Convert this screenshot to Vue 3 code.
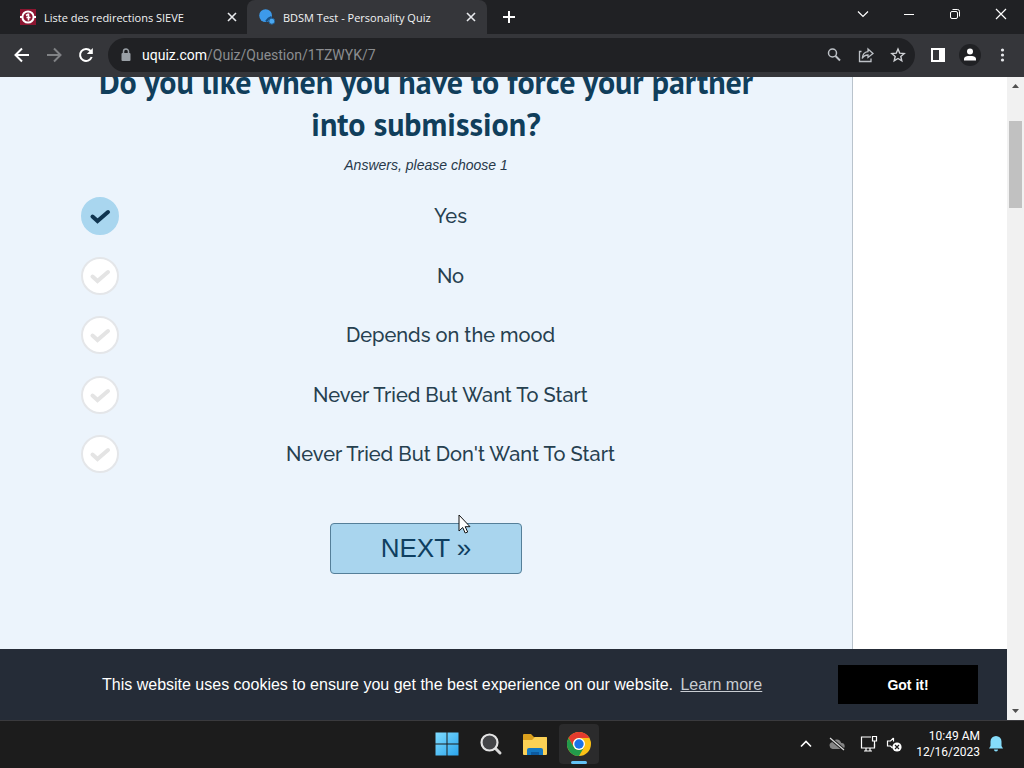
<script setup>
import { ref } from 'vue'

const answers = [
  'Yes',
  'No',
  'Depends on the mood',
  'Never Tried But Want To Start',
  "Never Tried But Don't Want To Start",
]
const chosen = ref(0)
</script>

<template>
  <div class="desktop">
    <header class="tabs">
      <div class="tab">
        <svg class="favicon" viewBox="0 0 16 16" width="16" height="16" aria-hidden="true">
          <rect width="16" height="16" fill="#8c1530" />
          <circle cx="8" cy="8" r="5.600" fill="none" stroke="#fff" stroke-width="2" />
          <path d="M0 8h3M13 8h3" stroke="#fff" stroke-width="2" />
          <path d="M8.500 4.500v7M6 6.500l2.500-1.500M6.500 8.500h4" fill="none" stroke="#fff" stroke-width="1.600" />
        </svg>
        <span class="tab-title">Liste des redirections SIEVE</span>
        <button class="icon" aria-label="Close first tab">
          <svg viewBox="0 0 16 16" width="16" height="16"><path d="M4 4l8 8M12 4l-8 8" fill="none" stroke="#e8eaed" stroke-width="1.600" /></svg>
        </button>
      </div>
      <div class="tab active">
        <svg class="favicon" viewBox="0 0 16 16" width="16" height="16" aria-hidden="true">
          <circle cx="6.600" cy="6.600" r="6.400" fill="#3d9aea" />
          <path d="M7 12.500l2.500-3 3-1.500" fill="none" stroke="#174f83" stroke-width="2" />
          <circle cx="12.800" cy="12.200" r="3" fill="#4ba8f0" stroke="#235b8c" />
        </svg>
        <span class="tab-title">BDSM Test - Personality Quiz</span>
        <button class="icon" aria-label="Close second tab">
          <svg viewBox="0 0 16 16" width="16" height="16"><path d="M4 4l8 8M12 4l-8 8" fill="none" stroke="#e8eaed" stroke-width="1.600" /></svg>
        </button>
      </div>
      <button class="icon new-tab" aria-label="New tab">
        <svg viewBox="0 0 16 16" width="16" height="16"><path d="M8 2v12M2 8h12" stroke="#fff" stroke-width="2" /></svg>
      </button>
      <div class="window-controls">
        <button class="icon" aria-label="Search tabs">
          <svg viewBox="0 0 16 16" width="16" height="16"><path d="M3 5.500l5 5 5-5" fill="none" stroke="#fff" stroke-width="1.200" /></svg>
        </button>
        <button class="icon" aria-label="Minimize">
          <svg viewBox="0 0 16 16" width="16" height="16"><path d="M3 8.500h10" stroke="#fff" /></svg>
        </button>
        <button class="icon" aria-label="Restore">
          <svg viewBox="0 0 16 16" width="16" height="16" fill="none" stroke="#fff"><rect x="3.500" y="5.500" width="7" height="7" rx="1.500" /><path d="M5.500 3.500h5a2 2 0 012 2v5" /></svg>
        </button>
        <button class="icon" aria-label="Close window">
          <svg viewBox="0 0 16 16" width="16" height="16"><path d="M3 3l10 10M13 3L3 13" stroke="#fff" stroke-width="1.200" /></svg>
        </button>
      </div>
    </header>

    <nav class="toolbar" aria-label="Browser toolbar">
      <button class="icon" aria-label="Back">
        <svg viewBox="0 0 16 16" width="16" height="16" fill="none" stroke="#fff" stroke-width="2"><path d="M15 8H2.500M8 1.500L1.500 8 8 14.500" /></svg>
      </button>
      <button class="icon" aria-label="Forward">
        <svg viewBox="0 0 16 16" width="16" height="16" fill="none" stroke="#808285" stroke-width="2"><path d="M1 8h12.500M8 1.500L14.500 8 8 14.500" /></svg>
      </button>
      <button class="icon" aria-label="Reload">
        <svg viewBox="0 0 16 16" width="16" height="16"><path d="M13.700 10A6 6 0 1112.600 4" fill="none" stroke="#fff" stroke-width="2" /><path d="M14.800 1v6H8.800z" fill="#fff" /></svg>
      </button>
      <div class="address">
        <svg viewBox="0 0 16 16" width="16" height="16" aria-hidden="true"><rect x="3.500" y="6" width="9" height="8" rx="1" fill="#9aa0a6" /><path d="M5.500 7V4.500a2.500 2.500 0 015 0V7" fill="none" stroke="#9aa0a6" stroke-width="1.500" /></svg>
        <div class="url" role="textbox" aria-label="Address" contenteditable="true" spellcheck="false">uquiz.com<span class="path">/Quiz/Question/1TZWYK/7</span></div>
        <button class="icon" aria-label="Zoom">
          <svg viewBox="0 0 16 16" width="16" height="16" fill="none" stroke="#bdc1c6" stroke-width="1.500"><circle cx="6.500" cy="6" r="4" /><path d="M9.500 9l4.500 4.500" stroke-width="2" /></svg>
        </button>
        <button class="icon" aria-label="Share">
          <svg viewBox="0 0 16 16" width="16" height="16" fill="none" stroke="#bdc1c6" stroke-width="1.300"><path d="M3.500 4.500H1.500v10h11.500v-3" /><path d="M10 2l5 4.500-5 4V8C7.500 8 5.500 9 4.200 11.500 4.500 7.500 6.500 5 10 4.600z" /></svg>
        </button>
        <button class="icon" aria-label="Bookmark">
          <svg viewBox="0 0 16 16" width="16" height="16" fill="none" stroke="#d0d2d6" stroke-width="1.400"><path d="M8 2l1.700 4.100 4.500.4-3.400 2.900 1 4.400L8 11.500l-3.800 2.300 1-4.400L1.800 6.500l4.500-.4z" /></svg>
        </button>
      </div>
      <button class="icon" aria-label="Side panel">
        <svg viewBox="0 0 16 16" width="16" height="16"><path fill="#fff" fill-rule="evenodd" d="M1 1h14v14H1zM3 3v10h6V3z" /></svg>
      </button>
      <button class="icon profile" aria-label="Profile">
        <svg viewBox="0 0 22 22" width="22" height="22"><circle cx="11" cy="11" r="11" fill="#202124" /><circle cx="11" cy="7.500" r="3" fill="#fff" /><path d="M5 16.500V15C5 12.500 8 12 11 12s6 .5 6 3v1.500z" fill="#fff" /></svg>
      </button>
      <button class="icon" aria-label="Menu">
        <svg viewBox="0 0 16 16" width="16" height="16" fill="#e8eaed"><circle cx="8.500" cy="3" r="1.600" /><circle cx="8.500" cy="8" r="1.600" /><circle cx="8.500" cy="13" r="1.600" /></svg>
      </button>
    </nav>

    <div class="viewport">
      <div class="page">
        <main class="content">
          <form class="quiz" @submit.prevent>
            <h1 id="question">Do you like when you have to force your partner into submission?</h1>
            <p class="hint">Answers, please choose 1</p>
            <div class="answers" role="radiogroup" aria-labelledby="question">
              <label v-for="(answer, i) in answers" :key="answer" class="answer">
                <input v-model="chosen" type="radio" name="answer" :value="i" />
                <span class="mark" aria-hidden="true">
                  <svg viewBox="0 0 38 38" width="38" height="38"><path d="M11.500 19.500l5 4.500L27 15" fill="none" stroke="currentColor" stroke-width="4" stroke-linecap="round" /></svg>
                </span>
                <span class="answer-text">{{ answer }}</span>
              </label>
            </div>
            <button class="next">NEXT »</button>
          </form>
          <aside class="side"></aside>
        </main>
        <section class="cookies" aria-label="Cookie notice">
          <p>This website uses cookies to ensure you get the best experience on our website. <a href="#">Learn more</a></p>
          <button class="got-it">Got it!</button>
        </section>
      </div>
      <div class="scrollbar">
        <button class="icon" aria-label="Scroll up"><svg viewBox="0 0 9 6" width="9" height="6"><path d="M1 5l3.500-4L8 5z" fill="#505050" /></svg></button>
        <div class="track"><div class="thumb"></div></div>
        <button class="icon" aria-label="Scroll down"><svg viewBox="0 0 9 6" width="9" height="6"><path d="M1 1l3.500 4L8 1z" fill="#505050" /></svg></button>
      </div>
      <svg class="pointer" viewBox="0 0 13 20" width="13" height="20" aria-hidden="true"><path d="M1 1v16l3.700-3.500 2.500 5.500 2.500-1-2.500-5.300H12z" fill="#fff" stroke="#111" stroke-width="1" /></svg>
    </div>

    <footer class="taskbar">
      <div class="apps">
        <button class="icon app" aria-label="Start">
          <svg viewBox="0 0 24 24" width="24" height="24"><defs><linearGradient id="win" x2="1" y2="1"><stop stop-color="#7fdcff" /><stop offset="1" stop-color="#2ba4ec" /></linearGradient></defs><path d="M.5.500h11v11H.5zM12.500.500h11v11h-11zM.5 12.500h11v11H.5zM12.500 12.500h11v11h-11z" fill="url(#win)" /></svg>
        </button>
        <button class="icon app" aria-label="Search">
          <svg viewBox="0 0 24 24" width="24" height="24"><path d="M16 16l5 5" stroke="#d8d8d8" stroke-width="3" stroke-linecap="round" /><circle cx="10.500" cy="10.500" r="8" fill="#444548" stroke="#e4e4e4" stroke-width="2.200" /></svg>
        </button>
        <button class="icon app" aria-label="File Explorer">
          <svg viewBox="0 0 24 24" width="24" height="24"><path d="M0 3a1 1 0 011-1h7l3 3h12a1 1 0 011 1v5H0z" fill="#dba01d" /><path d="M0 8h9l3-3h11a1 1 0 011 1v16a1 1 0 01-1 1H1a1 1 0 01-1-1z" fill="#fbd155" /><path d="M4 23v-5a2 2 0 012-2h12a2 2 0 012 2v5z" fill="#1478c2" /><path d="M8 20h8v3H8z" fill="#0d5a9f" /></svg>
        </button>
        <button class="icon app running" aria-label="Google Chrome">
          <svg viewBox="0 0 24 24" width="24" height="24"><circle cx="12" cy="12" r="12" fill="#fbc116" /><path d="M1.600 6A12 12 0 0122.400 6H12a6 6 0 00-5.200 9z" fill="#e33b2e" /><path d="M1.600 6A12 12 0 0012 24l5.200-9A6 6 0 016.800 15z" fill="#229a4b" /><circle cx="12" cy="12" r="6" fill="#fff" /><circle cx="12" cy="12" r="4.700" fill="#1a73e8" /></svg>
        </button>
      </div>
      <div class="tray">
        <div class="tray-icons">
          <button class="icon" aria-label="Hidden icons"><svg viewBox="0 0 16 16" width="16" height="16"><path d="M3 10.500l5-5 5 5" fill="none" stroke="#fff" stroke-width="1.600" /></svg></button>
          <button class="icon" aria-label="OneDrive"><svg viewBox="0 0 16 16" width="16" height="16"><path d="M3.500 13A3.500 3.500 0 013 6.200 5 5 0 0112.300 7 3 3 0 0113 13z" fill="#858585" /><path d="M1 2l14 12" stroke="#1c1c1c" stroke-width="3" /><path d="M1 2l14 12" stroke="#ddd" stroke-width="1.200" /></svg></button>
          <button class="icon" aria-label="Network"><svg viewBox="0 0 18 18" width="18" height="18" fill="none" stroke="#fff" stroke-width="1.200"><path d="M11 2H1.500v11h13V9M6 13v3M10 13v3M4 16h8" /><path d="M12.500 1.500h4v4.500h-4zM14.500 6v6" /></svg></button>
        </div>
        <button class="icon" aria-label="Volume muted"><svg viewBox="0 0 16 16" width="16" height="16"><path d="M7.500 2v3.500M7.500 2L4.500 5H1.500v5h3l2 2" fill="none" stroke="#fff" stroke-width="1.200" /><circle cx="11" cy="11" r="4.600" fill="#fff" /><path d="M9 9l4 4M13 9l-4 4" stroke="#1c1c1c" stroke-width="1.200" /></svg></button>
        <div class="clock"><time>10:49 AM</time><time>12/16/2023</time></div>
        <button class="icon" aria-label="Notifications"><svg viewBox="0 0 16 16" width="16" height="16" fill="#86dcfa"><path d="M8 0a5.500 5.500 0 015.500 5.500V10l1.500 2.500H1L2.500 10V5.500A5.500 5.500 0 018 0zM6 13.500h4a2 2 0 01-4 0z" /></svg></button>
      </div>
    </footer>
  </div>
</template>

<style>
body {
  margin: 0;
}
</style>

<style scoped>
.desktop {
  height: 100vh;
  display: flex;
  flex-direction: column;
  overflow: hidden;
  font-family: Roboto, "Noto Sans", sans-serif;
}
button {
  margin: 0;
  padding: 0;
  border: 0;
  background: none;
  font: inherit;
  color: inherit;
}
.icon {
  display: flex;
  flex: none;
  align-items: center;
  justify-content: center;
}
svg {
  display: block;
  flex: none;
}

.tabs {
  flex: none;
  display: flex;
  align-items: center;
  height: 34px;
  background: #202124;
  color: #f1f3f4;
  font-family: "Open Sans", "Noto Sans", sans-serif;
  font-size: 11px;
}
.tab {
  display: flex;
  align-items: center;
  gap: 8px;
  box-sizing: border-box;
  width: 240px;
  height: 34px;
  padding: 0 0 0 20px;
  margin-right: 7px;
}
.tab.active {
  margin-right: 14px;
  padding: 0 8px 0 12px;
  border-radius: 8px 8px 0 0;
  background: #35363a;
}
.tab-title {
  flex: 1;
  white-space: nowrap;
}
.window-controls {
  display: flex;
  gap: 30px;
  margin: 0 15px 6px auto;
}

.toolbar {
  flex: none;
  display: flex;
  align-items: center;
  gap: 16px;
  box-sizing: border-box;
  height: 43px;
  padding: 0 14px 1px;
  background: #35363a;
}
.address {
  flex: 1;
  display: flex;
  align-items: center;
  gap: 16px;
  box-sizing: border-box;
  height: 34px;
  padding: 0 9px 0 10px;
  margin: 0 -1px 0 -2px;
  border-radius: 17px;
  background: #202124;
}
.url {
  flex: 1;
  margin-left: -8px;
  color: #fff;
  font-size: 14px;
  line-height: 20px;
  white-space: nowrap;
}
.path {
  color: #8b8d90;
}
.profile {
  margin: 0 -3px;
}

.viewport {
  position: relative;
  flex: 1;
  min-height: 0;
  display: flex;
}
.page {
  flex: 1;
  display: flex;
  flex-direction: column;
  min-width: 0;
  background: #fff;
}
.content {
  flex: 1;
  min-height: 0;
  display: flex;
  overflow: hidden;
}
.quiz {
  flex: 1;
  display: flex;
  flex-direction: column;
  align-items: center;
  border-right: 1px solid #b9c3cc;
  background: #ecf4fc;
  color: #103e5b;
}
h1 {
  max-width: 700px;
  margin: -16px 0 0;
  font-family: "PT Sans", "Noto Sans", sans-serif;
  font-size: 32px;
  font-weight: 700;
  line-height: 42px;
  text-align: center;
}
.hint {
  margin: 10px 0 0;
  color: #27384a;
  font-family: "Liberation Sans", Arial, sans-serif;
  font-size: 14px;
  font-style: italic;
  line-height: 20px;
}
.answers {
  align-self: stretch;
  display: flex;
  flex-direction: column;
  justify-content: space-between;
  height: 276px;
  margin: 22px 70px 0 81px;
}
.answer {
  position: relative;
  display: flex;
  align-items: center;
}
.answer input {
  position: absolute;
  width: 38px;
  height: 38px;
  margin: 0;
  opacity: 0;
}
.mark {
  box-sizing: border-box;
  display: flex;
  align-items: center;
  justify-content: center;
  width: 38px;
  height: 38px;
  border: 2px solid #e4e6e9;
  border-radius: 50%;
  background: #fff;
  color: #e4e4e4;
}
input:checked + .mark {
  border-color: #a9d6ef;
  background: #a9d6ef;
  color: #103550;
}
.answer-text {
  flex: 1;
  color: #26404f;
  font-family: Raleway, Lato, sans-serif;
  font-size: 20px;
  font-weight: 500;
  line-height: 24px;
  text-align: center;
}
.next {
  box-sizing: border-box;
  width: 192px;
  height: 51px;
  margin-top: 50px;
  border: 1px solid #557f99;
  border-radius: 4px;
  background: #a9d5ee;
  color: #0f3f60;
  font-family: "Liberation Sans", Arial, sans-serif;
  font-size: 26px;
}
.side {
  width: 154px;
  background: #fff;
}

.cookies {
  flex: none;
  display: flex;
  align-items: center;
  justify-content: space-between;
  box-sizing: border-box;
  height: 71px;
  padding: 0 29px 0 102px;
  background: #252c37;
  color: #fff;
  font-family: "Liberation Sans", Arial, sans-serif;
  font-size: 16px;
}
.cookies p {
  margin: 0;
  line-height: 24px;
}
.cookies a {
  margin-left: 3px;
  color: #c9cdd2;
}
.got-it {
  width: 140px;
  height: 39px;
  background: #000;
  font-size: 14px;
  font-weight: 700;
}

.scrollbar {
  flex: none;
  display: flex;
  flex-direction: column;
  width: 17px;
  background: #f1f1f1;
}
.scrollbar .icon {
  height: 18px;
}
.track {
  flex: 1;
  padding: 26px 2px 0;
}
.thumb {
  height: 87px;
  background: #c1c1c1;
}
.pointer {
  position: absolute;
  top: 437px;
  left: 458px;
}

.taskbar {
  flex: none;
  display: grid;
  grid-template-columns: 1fr auto 1fr;
  align-items: center;
  box-sizing: border-box;
  height: 48px;
  padding-bottom: 1px;
  border-top: 1px solid #3a3a3d;
  background: #1c1c1c;
  color: #fff;
}
.apps {
  grid-column: 2;
  display: flex;
  gap: 4px;
  margin-left: 2px;
}
.app {
  width: 40px;
  height: 40px;
  border-radius: 4px;
}
.running {
  position: relative;
  background: #2b2b2c;
}
.running::after {
  content: "";
  position: absolute;
  bottom: 0;
  left: 12px;
  width: 16px;
  height: 3px;
  border-radius: 2px;
  background: #62c2f5;
}
.tray {
  justify-self: end;
  display: flex;
  align-items: center;
  gap: 8px;
  padding-right: 20px;
}
.tray-icons {
  display: flex;
  align-items: center;
  gap: 15px;
}
.clock {
  display: flex;
  flex-direction: column;
  align-items: flex-end;
  min-width: 70px;
  font-size: 12px;
  line-height: 16px;
}
</style>
